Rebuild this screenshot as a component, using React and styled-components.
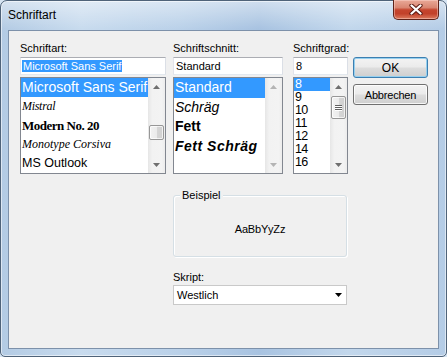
import React from "react"
import styled, { createGlobalStyle } from "styled-components"

const GlobalStyle = createGlobalStyle`
  html, body {
    margin: 0;
    padding: 0;
    background: #d6e4f2;
  }
  body {
    font-family: "Liberation Sans", Arial, sans-serif;
  }
`

const fonts = [
  { name: "Microsoft Sans Serif", size: 14, family: "'Liberation Sans', sans-serif", selected: true },
  { name: "Mistral", size: 12, family: "'Liberation Serif', serif", italic: true, spacing: -0.3 },
  { name: "Modern No. 20", size: 13, family: "'Liberation Serif', serif", weight: 700, spacing: -0.5 },
  { name: "Monotype Corsiva", size: 12, family: "'Liberation Serif', serif", italic: true },
  { name: "MS Outlook", size: 12.5, family: "'Liberation Sans', sans-serif" },
]

const styles = [
  { name: "Standard", selected: true },
  { name: "Schräg", italic: true },
  { name: "Fett", weight: 700 },
  { name: "Fett Schräg", italic: true, weight: 700, spacing: 0.5 },
]

const sizes = ["8", "9", "10", "11", "12", "14", "16"]

const Arrow = ({ up, color }) => (
  <svg width="7" height="4" viewBox="0 0 7 4">
    <polygon points={up ? "0,4 3.5,0 7,4" : "0,0 7,0 3.5,4"} fill={color} />
  </svg>
)

const CloseGlyph = () => (
  <svg width="14" height="11" viewBox="0 0 14 11">
    <path d="M2.5 1.5 L11.5 9.5 M11.5 1.5 L2.5 9.5" stroke="#5a1a12" strokeWidth="4.2" strokeLinecap="round" />
    <path d="M2.5 1.5 L11.5 9.5 M11.5 1.5 L2.5 9.5" stroke="#ffffff" strokeWidth="2.3" strokeLinecap="round" />
  </svg>
)

const ScrollBar = ({ thumbTop, thumbHeight, grip, arrowColor }) => (
  <Scroll>
    <ArrowBox>
      <Arrow up color={arrowColor} />
    </ArrowBox>
    <Track $offset={thumbTop}>
      {thumbHeight ? (
        <Thumb $h={thumbHeight}>
          {grip && (
            <Grip>
              <span />
              <span />
              <span />
            </Grip>
          )}
        </Thumb>
      ) : null}
    </Track>
    <ArrowBox>
      <Arrow color={arrowColor} />
    </ArrowBox>
  </Scroll>
)

const App = () => {
  return (
    <>
      <GlobalStyle />
      <Window>
        <TitleBar>
          <Title>Schriftart</Title>
          <CloseButton>
            <CloseGlyph />
          </CloseButton>
        </TitleBar>
        <Client>
          <TopRow>
            <Column $w={146} $mr={7}>
              <Label>Schriftart:</Label>
              <TextBox>
                <Marked>Microsoft Sans Serif</Marked>
              </TextBox>
              <ListBox>
                <Items>
                  {fonts.map(f => (
                    <Item
                      key={f.name}
                      $h={19}
                      $size={f.size}
                      $family={f.family}
                      $italic={f.italic}
                      $weight={f.weight}
                      $spacing={f.spacing}
                      $selected={f.selected}
                    >
                      {f.name}
                    </Item>
                  ))}
                </Items>
                <ScrollBar thumbTop={30} thumbHeight={15} arrowColor="#6f6f6f" />
              </ListBox>
            </Column>

            <Column $w={110} $mr={10}>
              <Label>Schriftschnitt:</Label>
              <TextBox>Standard</TextBox>
              <ListBox>
                <Items>
                  {styles.map(s => (
                    <Item
                      key={s.name}
                      $h={19.5}
                      $size={14}
                      $italic={s.italic}
                      $weight={s.weight}
                      $spacing={s.spacing}
                      $selected={s.selected}
                    >
                      {s.name}
                    </Item>
                  ))}
                </Items>
                <ScrollBar arrowColor="#b4b4b4" />
              </ListBox>
            </Column>

            <Column $w={55} $mr={5}>
              <Label>Schriftgrad:</Label>
              <TextBox>8</TextBox>
              <ListBox>
                <Items>
                  {sizes.map((s, i) => (
                    <Item key={s} $h={13} $size={12.5} $spacing={-0.6} $selected={i === 0}>
                      {s}
                    </Item>
                  ))}
                </Items>
                <ScrollBar thumbTop={1} thumbHeight={23} grip arrowColor="#6f6f6f" />
              </ListBox>
            </Column>

            <ButtonColumn>
              <Button $default>OK</Button>
              <Button>Abbrechen</Button>
            </ButtonColumn>
          </TopRow>

          <Lower>
            <Group>
              <Legend>Beispiel</Legend>
              <Sample>AaBbYyZz</Sample>
            </Group>
            <SkriptLabel>Skript:</SkriptLabel>
            <Combo>
              <span>Westlich</span>
              <Arrow color="#000000" />
            </Combo>
          </Lower>
        </Client>
      </Window>
    </>
  )
}

export default App

const Window = styled.div`
  box-sizing: border-box;
  width: 447px;
  height: 357px;
  display: flex;
  flex-direction: column;
  padding: 0 7px 7px 7px;
  border: 1px solid #4f6379;
  border-radius: 7px 7px 5px 5px;
  background:
    linear-gradient(180deg, rgba(255, 255, 255, 0.45) 0px, rgba(255, 255, 255, 0) 28px),
    linear-gradient(90deg, #b3cbe4 0%, #c8dbee 18%, #bad1e9 40%, #a8c3e1 58%, #c2d7ec 78%, #b4cce6 100%);
  box-shadow: inset 0 0 0 1px rgba(255, 255, 255, 0.55);
`

const TitleBar = styled.div`
  height: 29px;
  display: flex;
  justify-content: space-between;
  align-items: flex-start;
`

const Title = styled.div`
  padding-top: 7px;
  font-size: 12px;
  line-height: 14px;
  color: #000;
`

const CloseButton = styled.div`
  box-sizing: border-box;
  width: 46px;
  height: 20px;
  margin-top: -1px;
  display: flex;
  align-items: center;
  justify-content: center;
  border: 1px solid #5e2219;
  border-top: none;
  border-radius: 0 0 5px 5px;
  background: linear-gradient(180deg, #e9a998 0%, #d98672 40%, #c5452e 52%, #c2412a 72%, #dc7a5e 100%);
  box-shadow: inset 0 0 0 1px rgba(255, 220, 210, 0.45);
`

const Client = styled.div`
  flex: 1;
  background: #f0f0f0;
  border: 1px solid #7d91aa;
  padding: 11px 0 0 11px;
  font-size: 11px;
  color: #000;
`

const TopRow = styled.div`
  display: flex;
  align-items: flex-start;
`

const Column = styled.div`
  width: ${p => p.$w}px;
  margin-right: ${p => p.$mr}px;
  display: flex;
  flex-direction: column;
`

const Label = styled.div`
  height: 13px;
  line-height: 13px;
  margin-bottom: 2px;
  white-space: nowrap;
`

const TextBox = styled.div`
  box-sizing: border-box;
  height: 18px;
  margin-bottom: 2px;
  padding: 2px 1px 0 2px;
  background: #fff;
  border: 1px solid #abadb3;
  border-left-color: #e2e3ea;
  border-right-color: #dbdfe6;
  border-bottom-color: #e3e9ef;
  line-height: 13px;
  white-space: nowrap;
  overflow: hidden;
`

const Marked = styled.span`
  background: #3399ff;
  color: #fff;
  padding: 0 1px;
  margin-left: -1px;
`

const ListBox = styled.div`
  box-sizing: border-box;
  height: 97px;
  display: flex;
  background: #fff;
  border: 1px solid #828790;
`

const Items = styled.div`
  flex: 1;
  min-width: 0;
  overflow: hidden;
`

const Item = styled.div`
  height: ${p => p.$h}px;
  line-height: ${p => p.$h}px;
  padding-left: 1px;
  font-size: ${p => p.$size}px;
  font-family: ${p => p.$family || "'Liberation Sans', Arial, sans-serif"};
  font-style: ${p => (p.$italic ? "italic" : "normal")};
  font-weight: ${p => p.$weight || 400};
  letter-spacing: ${p => p.$spacing || 0}px;
  white-space: nowrap;
  overflow: hidden;
  background: ${p => (p.$selected ? "#3399ff" : "transparent")};
  color: ${p => (p.$selected ? "#fff" : "#000")};
`

const Scroll = styled.div`
  width: 17px;
  flex: none;
  display: flex;
  flex-direction: column;
  background: linear-gradient(90deg, #e6e6e6 0%, #f2f2f2 25%, #f3f3f3 80%, #ececec 100%);
`

const ArrowBox = styled.div`
  height: 17px;
  display: flex;
  align-items: center;
  justify-content: center;
`

const Track = styled.div`
  flex: 1;
  padding-top: ${p => p.$offset || 0}px;
  display: flex;
  flex-direction: column;
  align-items: center;
`

const Thumb = styled.div`
  box-sizing: border-box;
  width: 15px;
  height: ${p => p.$h}px;
  border: 1px solid #979797;
  border-radius: 2px;
  background: linear-gradient(90deg, #f2f2f2 0%, #ebebeb 50%, #d6d6d6 51%, #d0d0d0 100%);
  box-shadow: inset 0 0 0 1px rgba(255, 255, 255, 0.7);
  display: flex;
  align-items: center;
  justify-content: center;
`

const Grip = styled.div`
  display: flex;
  flex-direction: column;
  gap: 1px;

  span {
    display: block;
    width: 7px;
    height: 1px;
    background: #5f5f5f;
    box-shadow: 0 1px 0 #fff;
  }
`

const ButtonColumn = styled.div`
  width: 75px;
  padding-top: 15px;
  display: flex;
  flex-direction: column;
  gap: 6px;
`

const Button = styled.div`
  box-sizing: border-box;
  height: 21px;
  display: flex;
  align-items: center;
  justify-content: center;
  border: 1px solid ${p => (p.$default ? "#3c7fb1" : "#707070")};
  border-radius: 3px;
  background: linear-gradient(180deg, #f3f3f3 0%, #ebebeb 48%, #dddddd 52%, #cfcfcf 100%);
  box-shadow: inset 0 0 0 1px ${p => (p.$default ? "#96d0ef" : "rgba(255, 255, 255, 0.8)")};
  font-size: ${p => (p.$default ? 12 : 11)}px;
  letter-spacing: ${p => (p.$default ? 0 : -0.2)}px;
`

const Lower = styled.div`
  margin: 21px 0 0 153px;
  width: 174px;
  display: flex;
  flex-direction: column;
`

const Group = styled.div`
  position: relative;
  box-sizing: border-box;
  height: 62px;
  border: 1px solid #d5dfe5;
  border-radius: 3px;
  box-shadow: 1px 1px 0 #fff inset, 1px 1px 0 #fff;
  padding-top: 27px;
  text-align: center;
`

const Legend = styled.span`
  position: absolute;
  top: -7px;
  left: 6px;
  padding: 0 2px;
  line-height: 13px;
  background: #f0f0f0;
`

const Sample = styled.div`
  line-height: 13px;
  letter-spacing: -0.2px;
`

const SkriptLabel = styled.div`
  margin-top: 14px;
  margin-bottom: 1px;
  line-height: 13px;
`

const Combo = styled.div`
  box-sizing: border-box;
  height: 20px;
  display: flex;
  align-items: center;
  justify-content: space-between;
  padding: 0 4px 0 3px;
  background: #fff;
  border: 1px solid #c9c9c9;
  font-size: 11px;
`
